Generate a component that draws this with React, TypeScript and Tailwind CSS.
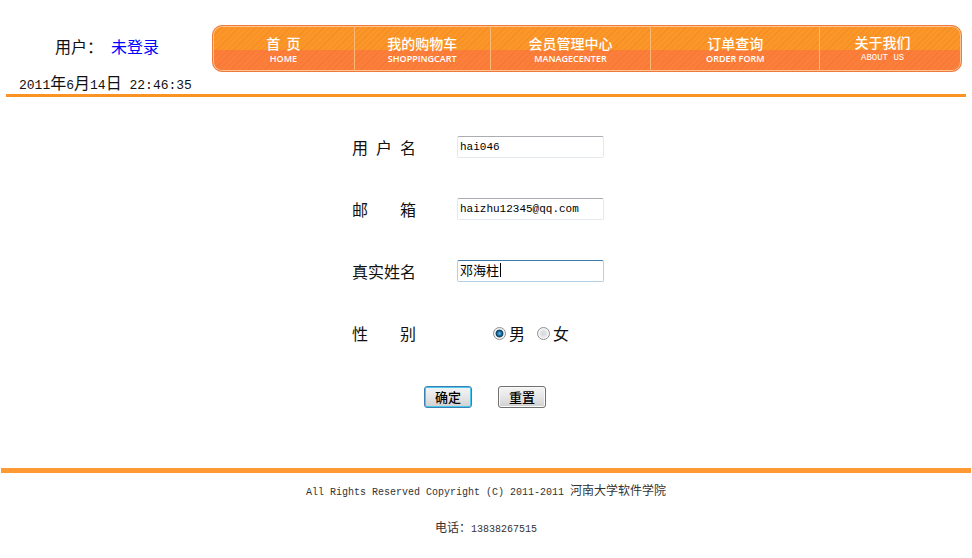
import type { ReactNode } from "react";

const navItems = [
  { zh: "首  页", en: "HOME" },
  { zh: "我的购物车", en: "SHOPPINGCART" },
  { zh: "会员管理中心", en: "MANAGECENTER" },
  { zh: "订单查询", en: "ORDER FORM" },
  { zh: "关于我们", en: "ABOUT US", mono: true },
];

const cjk = "font-['Noto_Sans_CJK_SC',sans-serif]";
const mono = "font-['Liberation_Mono','Noto_Sans_CJK_SC',monospace]";

const inputClass =
  "h-[22px] w-[147px] rounded-[2px] border border-[#e3e9ef] border-t-[#abadb3] bg-white px-[2px] text-black outline-none";

function Header() {
  return (
    <header className="mx-[6px] flex border-b-[3px] border-[#fb9224] pt-[25px]">
      <div className="w-[206px] shrink-0 text-[16px] leading-[24px]">
        <p className="flex gap-[8px] pt-[9px] pl-[49px]">
          <span>用户：</span>
          <a href="#login" className="text-[#0000ff]">未登录</a>
        </p>
        <p className="h-[36px] pt-[14px] pl-[13px] whitespace-nowrap leading-[20px]">
          <Num>2011</Num>年<Num>6</Num>月<Num>14</Num>日<Num>&nbsp;22:46:35</Num>
        </p>
      </div>
      <nav className="mr-[4px] grid h-[47px] flex-1 grid-cols-[142fr_136fr_161fr_169fr_141fr] overflow-hidden rounded-[10px] border border-[#ee7a3c] bg-[repeating-linear-gradient(135deg,transparent_0px,transparent_3px,rgba(225,90,20,0.16)_3px,rgba(225,90,20,0.16)_4px),linear-gradient(#fb9628_0%,#fb9628_53%,#fb7e3a_53%,#fb7e3a_100%)] shadow-[inset_0_0_0_1px_#ffc494]">
        {navItems.map((item) => (
          <a
            key={item.en}
            href="#nav"
            className="flex flex-col items-center border-r border-[#fdb877] pt-[7px] text-white last:border-r-0 last:pt-[6px] last:pr-[16px]"
          >
            <span className="text-[14px] leading-[20px] font-medium whitespace-pre">{item.zh}</span>
            <span
              className={
                item.mono
                  ? "font-['Liberation_Mono',monospace] text-[9px] leading-[12px]"
                  : "font-['Open_Sans',sans-serif] text-[9px] leading-[12px] font-semibold"
              }
            >
              {item.en}
            </span>
          </a>
        ))}
      </nav>
    </header>
  );
}

function Num({ children }: { children: ReactNode }) {
  return <span className="font-['Liberation_Mono',monospace] text-[13px]">{children}</span>;
}

function Field({ id, label, children }: { id: string; label: string; children: ReactNode }) {
  return (
    <div className="flex h-[22px] items-center gap-[41px]">
      <label htmlFor={id} className="w-[64px] whitespace-nowrap text-[16px] leading-[20px] [text-align-last:justify]">
        {label}
      </label>
      {children}
    </div>
  );
}

function Gender({ id, label, checked }: { id: string; label: string; checked?: boolean }) {
  return (
    <span className="flex items-center gap-[3px]">
      <input
        type="radio"
        name="gender"
        id={id}
        defaultChecked={checked}
        className="size-[13px] appearance-none rounded-full border border-[#8e8f8f] bg-[radial-gradient(circle,#d4d8dc_0%,#e4e6e8_45%,#ffffff_70%)] shadow-[inset_0_0_0_1px_#f4f4f4] checked:bg-[radial-gradient(circle,#58c8f0_0%,#1873a8_25%,#123c5c_45%,#dde3e8_55%,#ffffff_75%)]"
      />
      <label htmlFor={id} className="text-[16px] leading-[22px]">{label}</label>
    </span>
  );
}

export default function App() {
  return (
    <div className={`${cjk} bg-white text-[#111111]`}>
      <Header />
      <main>
        <form className="mx-auto flex w-[268px] flex-col gap-[40px] pt-[39px]">
          <Field id="username" label="用 户 名">
            <input id="username" type="text" defaultValue="hai046" className={`${inputClass} ${mono} text-[11px]`} />
          </Field>
          <Field id="email" label="邮 箱">
            <input id="email" type="text" defaultValue="haizhu12345@qq.com" className={`${inputClass} ${mono} text-[11px]`} />
          </Field>
          <Field id="realname" label="真实姓名">
            <span className="relative flex">
              <input
                id="realname"
                type="text"
                defaultValue="邓海柱"
                className="h-[22px] w-[147px] rounded-[2px] border border-[#b5cfe7] border-t-[#3d7bad] bg-white px-[2px] pb-[3px] text-[13px] text-black outline-none"
              />
              <span className="absolute top-[3px] left-[43px] h-[14px] w-px bg-black" />
            </span>
          </Field>
          <div role="radiogroup" aria-label="性别" className="flex h-[22px] items-center gap-[77px]">
            <span className="w-[64px] text-[16px] leading-[20px] [text-align-last:justify]">性 别</span>
            <div className="flex gap-[12px]">
              <Gender id="male" label="男" checked />
              <Gender id="female" label="女" />
            </div>
          </div>
          <div className="flex gap-[26px] pt-[2px] pl-[72px] text-[13px] font-medium text-black">
            <button
              type="submit"
              className="h-[22px] w-[48px] rounded-[3px] border border-[#3c7fb1] bg-linear-to-b from-[#f4f4f4] via-[#e6e6e6] to-[#d0d0d0] leading-[18px] shadow-[inset_0_0_0_1px_#48c8f0]"
            >
              确定
            </button>
            <button
              type="reset"
              className="h-[22px] w-[48px] rounded-[3px] border border-[#707070] bg-linear-to-b from-[#f4f4f4] via-[#e6e6e6] to-[#d0d0d0] leading-[18px] shadow-[inset_0_0_0_1px_#fafafa]"
            >
              重置
            </button>
          </div>
        </form>
      </main>
      <footer className="mx-px mt-[60px] border-t-[5px] border-[#ff9933] pt-[8px] text-center text-[12px] leading-[18px] text-[#333333]">
        <p>
          <span className="font-['Liberation_Mono',monospace] text-[10px]">
            All Rights Reserved Copyright (C) 2011-2011&nbsp;
          </span>
          河南大学软件学院
        </p>
        <p className="mt-[16px]">
          电话：<span className="font-['Liberation_Mono',monospace] text-[10px]">13838267515</span>
        </p>
      </footer>
    </div>
  );
}
